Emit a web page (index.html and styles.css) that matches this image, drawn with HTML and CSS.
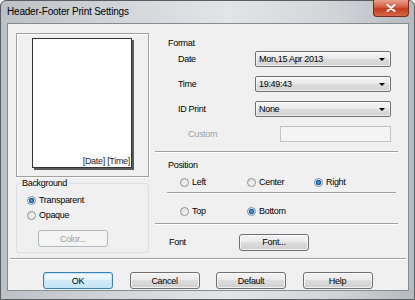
FILE: index.html
```html
<!DOCTYPE html>
<html lang="en">
<head>
	<meta charset="UTF-8">
	<title>Header-Footer Print Settings</title>
	<link rel="stylesheet" href="styles.css">
</head>
<body>
	<div class="window">
		<div class="titlebar">
			<span class="title">Header-Footer Print Settings</span>
			<div class="close">
				<svg width="10" height="8" viewBox="0 0 10 8"><path d="M1.5 1 L8.5 7 M8.5 1 L1.5 7" stroke="#fff" stroke-width="2" stroke-linecap="round"/></svg>
			</div>
		</div>
		<div class="client">
			<div class="main">
				<div class="left">
					<div class="preview">
						<div class="page"><span>[Date] [Time]</span></div>
					</div>
					<fieldset class="group">
						<legend>Background</legend>
						<label class="opt first"><span class="dot on"></span>Transparent</label>
						<label class="opt"><span class="dot"></span>Opaque</label>
						<div class="btn disabled color">Color...</div>
					</fieldset>
				</div>

				<div class="right">
					<div class="caption">Format</div>
					<div class="row first">
						<span class="lbl">Date</span>
						<div class="combo"><span>Mon,15 Apr 2013</span></div>
					</div>
					<div class="row">
						<span class="lbl">Time</span>
						<div class="combo"><span>19:49:43</span></div>
					</div>
					<div class="row">
						<span class="lbl">ID Print</span>
						<div class="combo"><span>None</span></div>
					</div>
					<div class="row custom">
						<span class="lbl">Custom</span>
						<div class="textbox"></div>
					</div>

					<div class="hr sep-format"></div>
					<div class="caption position">Position</div>
					<div class="opts first">
						<label class="opt"><span class="dot"></span>Left</label>
						<label class="opt"><span class="dot"></span>Center</label>
						<label class="opt"><span class="dot on"></span>Right</label>
					</div>
					<div class="hr inner"></div>
					<div class="opts second">
						<label class="opt"><span class="dot"></span>Top</label>
						<label class="opt"><span class="dot on"></span>Bottom</label>
					</div>
					<div class="hr sep-font"></div>
					<div class="fontrow">
						<span class="lbl">Font</span>
						<div class="btn">Font...</div>
					</div>
				</div>
			</div>

			<div class="sep"></div>
			<div class="buttons">
				<div class="btn default">OK</div>
				<div class="btn">Cancel</div>
				<div class="btn">Default</div>
				<div class="btn">Help</div>
			</div>
		</div>
	</div>
</body>
</html>
```

FILE: styles.css
```css
*{
	box-sizing: border-box;
}
body{
	margin: 0;
	font-family: "Liberation Sans", Arial, sans-serif;
	font-size: 9px;
	letter-spacing: -0.3px;
	color: #000;
	background: #fff;
}
.window{
	width: 415px;
	height: 300px;
	border: 1px solid #595e64;
	border-radius: 6px 6px 0 0;
	padding: 0 5px 8px 6px;
	display: flex;
	flex-direction: column;
	background: linear-gradient(to right, #bcc1c7 0%, #d3d6da 30%, #e3e4e6 55%, #d2d5d8 80%, #b5babf 100%);
}
.titlebar{
	height: 22px;
	display: flex;
	justify-content: space-between;
	align-items: flex-start;
}
.title{
	font-size: 10px;
	letter-spacing: -0.2px;
	line-height: 22px;
}
.close{
	width: 36px;
	height: 17px;
	margin-top: -1px;
	border: 1px solid #7d2b1d;
	border-top: none;
	border-radius: 0 0 4px 4px;
	background: linear-gradient(#e8a08d, #d65c40 45%, #c33a1e 55%, #d4694c);
	display: flex;
	align-items: center;
	justify-content: center;
}

.client{
	flex: 1;
	background: #f0f0f0;
	border: 1px solid #848b93;
}
.main{
	display: flex;
	padding: 9px 8px 0 8px;
}
.left{
	width: 133px;
	display: flex;
	flex-direction: column;
}
.preview{
	height: 144px;
	border: 1px solid #a0a0a0;
	box-shadow: 1px 1px 0 #fff, inset 1px 1px 0 #fff;
	padding: 4px 0 0 15px;
}
.page{
	width: 100px;
	height: 130px;
	background: #fff;
	border: 1px solid #333;
	box-shadow: 2px 2px 0 #5a5a5a;
	display: flex;
	align-items: flex-end;
	justify-content: flex-end;
	padding: 0 1px 0 0;
	line-height: 11px;
	color: #1c1c30;
}
.group{
	margin: 1px 0 0;
	padding: 0 0 0 4px;
	height: 75px;
	min-width: 0;
	border: 1px solid #d5dfe5;
	border-radius: 3px;
}
.group legend{
	padding: 0 1px;
	line-height: 11px;
}
.group .opt{
	margin-left: 6px;
	margin-top: 3px;
}
.group .opt.first{
	margin-top: 5px;
}
.color{
	width: 93px;
	margin: 9px 0 0 17px;
}

.opt{
	display: flex;
	align-items: center;
	gap: 3px;
	height: 12px;
}
.dot{
	width: 9px;
	height: 9px;
	border-radius: 50%;
	border: 1px solid #8f9090;
	background: linear-gradient(135deg, #dcdcdc, #fbfbfb);
}
.dot.on{
	border-color: #6f8fae;
	background: radial-gradient(circle, #5fb2ea 0, #1f5d98 2px, #2a6aa5 2.5px, #dfe6ec 3px, #fbfbfb 4px);
}

.right{
	flex: 1;
	margin-left: 6px;
	padding-top: 5px;
}
.caption{
	line-height: 11px;
	padding-left: 13px;
}
.caption.position{
	margin-top: 7px;
}
.row{
	display: flex;
	align-items: center;
	height: 16px;
	margin-top: 9px;
}
.row.first{
	margin-top: 2px;
}
.lbl{
	width: 100px;
	padding-left: 23px;
}
.combo{
	width: 136px;
	height: 16px;
	border: 1px solid #707070;
	border-radius: 2px;
	background: linear-gradient(#f6f6f6, #ebebeb 45%, #dedede 50%, #d2d2d2);
	box-shadow: inset 0 0 0 1px rgba(255,255,255,.6);
	display: flex;
	align-items: center;
	justify-content: space-between;
	padding: 0 5px 0 3px;
}
.combo::after{
	content: "";
	border-left: 3px solid transparent;
	border-right: 3px solid transparent;
	border-top: 3px solid #000;
}
.custom .lbl{
	width: 125px;
	padding-left: 33px;
	color: #a0a0a0;
}
.textbox{
	width: 111px;
	height: 16px;
	border: 1px solid #c4c4c4;
	background: #f4f4f4;
}
.hr{
	height: 2px;
	border-top: 1px solid #a0a0a0;
	border-bottom: 1px solid #fff;
	margin-right: 2px;
}
.sep-format{
	margin-top: 9px;
}
.hr.inner{
	margin: 4px 4px 0 12px;
}
.sep-font{
	margin-top: 6px;
}
.opts{
	display: flex;
	padding-left: 25px;
}
.opts .opt{
	width: 67px;
}
.opts.first{
	margin-top: 5px;
}
.opts.second{
	margin-top: 11px;
}
.fontrow{
	display: flex;
	align-items: center;
	height: 16px;
	margin-top: 9px;
}
.fontrow .lbl{
	width: 84px;
	padding-left: 14px;
}

.btn{
	width: 70px;
	height: 17px;
	border: 1px solid #707070;
	border-radius: 3px;
	background: linear-gradient(#f2f2f2, #ebebeb 45%, #dddddd 50%, #cfcfcf);
	box-shadow: inset 0 0 0 1px rgba(255,255,255,.7);
	display: flex;
	align-items: center;
	justify-content: center;
}
.btn.default{
	border-color: #3c7fb1;
	background: linear-gradient(#f2f9fd, #e3f3fc 45%, #d2ebf8 50%, #c4e3f5);
	box-shadow: inset 0 0 0 1px #bfe3f7;
}
.btn.disabled{
	border-color: #b5b9bc;
	background: #f4f4f4;
	color: #a0a0a0;
	box-shadow: none;
}
.sep{
	height: 2px;
	border-top: 1px solid #a0a0a0;
	border-bottom: 1px solid #fff;
	margin: 5px 2px 0;
}
.buttons{
	display: flex;
	gap: 16.5px;
	padding-left: 35px;
	margin-top: 12px;
}
```
